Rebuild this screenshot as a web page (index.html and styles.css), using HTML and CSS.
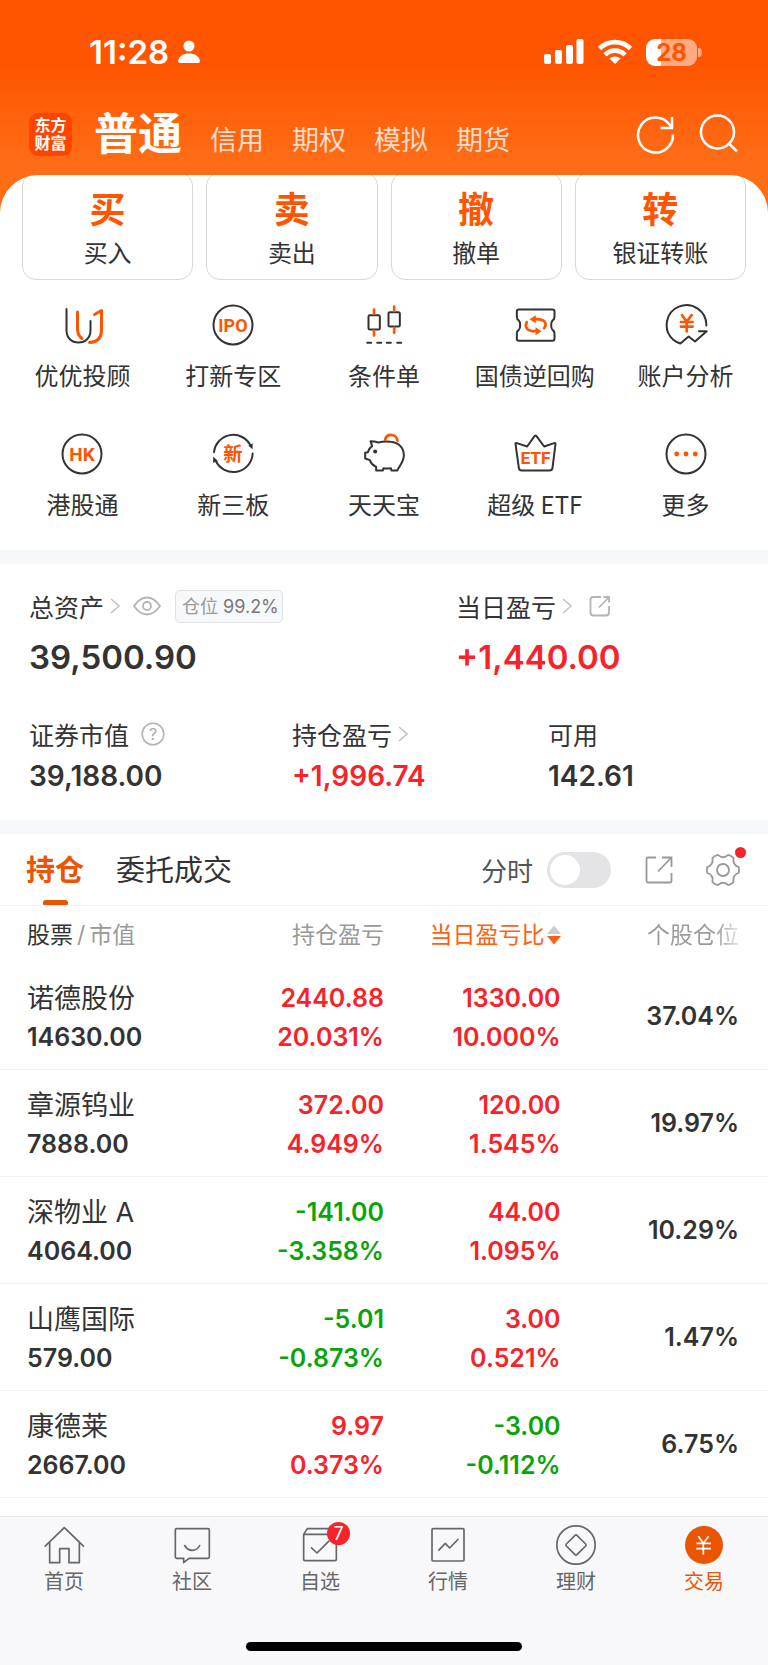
FILE: index.html
```html
<!DOCTYPE html>
<html lang="zh-CN">
<head>
<meta charset="utf-8">
<meta name="viewport" content="width=device-width, initial-scale=1">
<title>交易</title>
<link rel="stylesheet" href="styles.css">
</head>
<body>
<div class="app">
  <header class="header">
    <div class="status">
      <div class="status-time">
        <span>11:28</span>
        <svg width="22" height="24" viewBox="0 0 22 24" fill="#fff"><circle cx="11" cy="6" r="5.5"/><path d="M0 21C1 16 5 13.500 11 13.500S21 16 22 21Q22 23 20 23H2Q0 23 0 21Z"/></svg>
      </div>
      <div class="status-icons">
        <svg width="40" height="26" viewBox="0 0 40 26" fill="#fff"><rect x="0" y="15" width="7" height="10" rx="2"/><rect x="11" y="11" width="7" height="14" rx="2"/><rect x="22" y="6" width="7" height="19" rx="2"/><rect x="32.500" y="0" width="7" height="25" rx="2"/></svg>
        <svg width="36" height="26" viewBox="0 0 36 26"><g fill="none" stroke="#fff" stroke-width="4.600"><path d="M2.500 9.500A22 22 0 0 1 33.500 9.500"/><path d="M8 15.800A14 14 0 0 1 28 15.800"/></g><path d="M12.500 19.500A8.500 8.500 0 0 1 23.500 19.500L18 25Z" fill="#fff"/></svg>
        <div class="battery"><span>28</span></div>
      </div>
    </div>
    <div class="topbar">
      <div class="logo">东方<br>财富</div>
      <nav class="account-tabs">
        <a class="active" href="#">普通</a>
        <a href="#">信用</a>
        <a href="#">期权</a>
        <a href="#">模拟</a>
        <a href="#">期货</a>
      </nav>
      <button class="icon-btn" aria-label="刷新"><svg width="40" height="40" viewBox="0 0 40 40" fill="none" stroke="#fff" stroke-width="2.500"><path d="M37 20.500A17.500 17.500 0 1 1 33.500 10.500L36.500 14"/><path d="M36 3V14H24.500"/></svg></button>
      <button class="icon-btn" aria-label="搜索"><svg width="40" height="40" viewBox="0 0 40 40" fill="none" stroke="#fff" stroke-width="2.500"><circle cx="18.500" cy="18" r="16.500"/><path d="M29.500 29L38 37.500"/></svg></button>
    </div>
  </header>

  <main>
    <section class="panel">
      <div class="actions">
        <button class="action"><b>买</b><span>买入</span></button>
        <button class="action"><b>卖</b><span>卖出</span></button>
        <button class="action"><b>撤</b><span>撤单</span></button>
        <button class="action"><b>转</b><span>银证转账</span></button>
      </div>
      <div class="shortcuts">
        <a href="#"><svg class="ico" viewBox="0 0 44 44"><path class="k" d="M6.500 6V27C6.500 35 11.500 39.500 18.500 39.500S30.500 35 30.500 27V18"/><path class="o" d="M17.500 9V26Q17.500 32 22 35.500M29.500 39.500Q41.500 39 41.500 27V7.500L34.500 11.500"/></svg><span>优优投顾</span></a>
        <a href="#"><svg class="ico" viewBox="0 0 44 44"><circle class="k" cx="22" cy="22" r="19.500"/><text x="22" y="28.500" font-size="18">IPO</text></svg><span>打新专区</span></a>
        <a href="#"><svg class="ico z" viewBox="1084.500 37.500 132 132"><rect class="k" x="1104" y="74" width="34" height="43" rx="4"/><rect class="k" x="1164" y="65" width="34" height="43" rx="4"/><path class="o" d="M1120.500 57V70M1120.500 121V135M1181 48V61M1181 112V127"/><path class="k" d="M1100 157H1112M1130 157H1142M1159 157H1171M1190 157H1202"/></svg><span>条件单</span></a>
        <a href="#"><svg class="ico z" viewBox="385.500 37.500 132 132"><path class="k" d="M403 57H504Q510 57 510 63V80Q510 86 504 90Q500 94 500 104T504 118Q510 122 510 128V145Q510 151 504 151H403Q397 151 397 145V128Q397 122 403 118Q407 114 407 104T403 90Q397 86 397 80V63Q397 57 403 57Z"/><path class="o" d="M427 95Q421 106 428 115Q434 122 452 122M479 113Q487 103 480 93Q473 86 455 86"/><path d="M435 86L454 74V98ZM471 122L453 110V134Z" fill="#ff5500"/></svg><span>国债逆回购</span></a>
        <a href="#"><svg class="ico z" viewBox="837 37.500 132 132"><path class="k" d="M964 105A59.500 59.500 0 1 0 864 147Q872 154 886 159L911 138L930 153L965 122H942"/><path class="o" d="M891 74L905 93L920 74M905 93V123M888 94.500H923M888 108.500H923"/></svg><span>账户分析</span></a>
        <a href="#"><svg class="ico" viewBox="0 0 44 44"><circle class="k" cx="22" cy="22" r="19.500"/><text x="22" y="28.500" font-size="19">HK</text></svg><span>港股通</span></a>
        <a href="#"><svg class="ico z" viewBox="633 424.500 132 132"><path class="k" d="M642 485A58 58 0 0 1 752 466M758 489A58 58 0 0 1 647 510"/><path d="M745 466L758 458V476ZM654 512L639 517L640 498Z" fill="#333"/><text x="699" y="511" font-size="58">新</text></svg><span>新三板</span></a>
        <a href="#"><svg class="ico z" viewBox="10.500 19.500 132 132"><path class="k" d="M36 47Q48 47 60 51Q76 47 96 49C122 51 136 68 136 90C136 108 124 120 116 135H99L97 128Q86 130 75 128L73 135H53V124Q38 117 34 104L20 99V82L28 80Q31 68 41 62Z"/><path class="o" d="M80 43C84 23 113 23 117 46"/><circle cx="50" cy="78" r="6" fill="#333"/></svg><span>天天宝</span></a>
        <a href="#"><svg class="ico z" viewBox="385.500 424.500 132 132"><path class="k" d="M393 460Q393 457 397 458L428 468L450 437Q453 434 456 437L479 468L509 458Q513 457 513 460L504 532Q503 540 495 540H412Q404 540 403 532Z"/><text x="453" y="520" font-size="52">ETF</text></svg><span>超级 ETF</span></a>
        <a href="#"><svg class="ico" viewBox="0 0 44 44"><circle class="k" cx="22" cy="22" r="19.500"/><g fill="#ff5500"><circle cx="12.700" cy="22" r="2.400"/><circle cx="22" cy="22" r="2.400"/><circle cx="31.300" cy="22" r="2.400"/></g></svg><span>更多</span></a>
      </div>
    </section>

    <section class="assets">
      <div class="asset-row two">
        <div class="asset big">
          <div class="asset-label">总资产<svg class="chev" viewBox="0 0 10 16"><path d="M1 1L9 8L1 15"/></svg>
            <button class="plain eye" aria-label="隐藏金额"><svg width="28" height="20" viewBox="0 0 28 20" fill="none" stroke="#b4b4b6" stroke-width="1.800"><path d="M1 10Q7 1.500 14 1.500T27 10Q21 18.500 14 18.500T1 10Z"/><circle cx="14" cy="10" r="4"/></svg></button>
            <span class="badge">仓位 <em>99.2%</em></span></div>
          <strong>39,500.90</strong>
        </div>
        <div class="asset big">
          <div class="asset-label">当日盈亏<svg class="chev" viewBox="0 0 10 16"><path d="M1 1L9 8L1 15"/></svg>
            <button class="plain share-sm" aria-label="分享"><svg width="22" height="22" viewBox="0 0 22 22" fill="none" stroke="#b4b4b6" stroke-width="1.800"><path d="M12 2H4.500Q1.500 2 1.500 5V17.500Q1.500 20.500 4.500 20.500H17Q20 20.500 20 17.500V11M10 12.500L20 2M14.500 2H20V7.500"/></svg></button></div>
          <strong class="up">+1,440.00</strong>
        </div>
      </div>
      <div class="asset-row three">
        <div class="asset"><div class="asset-label">证券市值<svg class="help" width="24" height="24" viewBox="0 0 24 24"><circle cx="12" cy="12" r="10.800" fill="none" stroke="#b4b4b6" stroke-width="1.600"/><text x="12" y="17.500">?</text></svg></div><strong>39,188.00</strong></div>
        <div class="asset"><div class="asset-label">持仓盈亏<svg class="chev" viewBox="0 0 10 16"><path d="M1 1L9 8L1 15"/></svg></div><strong class="up">+1,996.74</strong></div>
        <div class="asset"><div class="asset-label">可用</div><strong>142.61</strong></div>
      </div>
    </section>

    <section class="holdings">
      <div class="toolbar">
        <button class="tab active">持仓</button>
        <button class="tab">委托成交</button>
        <label class="switch-label">分时<input class="switch" type="checkbox" role="switch"></label>
        <button class="plain share" aria-label="分享"><svg width="28" height="28" viewBox="0 0 28 28" fill="none" stroke="#999" stroke-width="1.800"><path d="M11 1.500H3Q1.500 1.500 1.500 3V25Q1.500 26.500 3 26.500H25Q26.500 26.500 26.500 25V17M13 15.500L26.500 1.500M17 1.500H26.500V11"/></svg></button>
        <button class="plain gear" aria-label="设置"><svg width="36" height="36" viewBox="0 0 36 36" fill="none" stroke="#999" stroke-width="1.800"><path d="M33.700 15Q34.500 18 33.700 21Q27.500 22.500 28.500 30.100Q26 32.500 23.200 33.100Q18 28.500 12.800 33.100Q10 32.500 7.500 30.100Q8.500 22.500 2.300 21Q1.500 18 2.300 15Q8.500 13.500 7.500 5.900Q10 3.500 12.800 2.900Q18 7.500 23.200 2.900Q26 3.500 28.500 5.900Q27.500 13.500 33.700 15Z"/><circle cx="18" cy="18" r="6"/></svg><i class="dot"></i></button>
      </div>
      <table class="stocks">
        <thead>
          <tr><th class="name"><b>股票</b><i>/</i>市值</th><th>持仓盈亏</th><th class="sorted">当日盈亏比<svg class="sort" width="14" height="20" viewBox="0 0 14 20"><path d="M7 0.500L14 9H0Z" fill="#ccc"/><path d="M0 11H14L7 19.500Z" fill="#ff5f0f"/></svg></th><th class="fade">个股仓位</th></tr>
        </thead>
        <tbody>
          <tr><td class="name"><span>诺德股份</span><b>14630.00</b></td><td class="up">2440.88<br>20.031%</td><td class="up">1330.00<br>10.000%</td><td>37.04%</td></tr>
          <tr><td class="name"><span>章源钨业</span><b>7888.00</b></td><td class="up">372.00<br>4.949%</td><td class="up">120.00<br>1.545%</td><td>19.97%</td></tr>
          <tr><td class="name"><span>深物业 A</span><b>4064.00</b></td><td class="down">-141.00<br>-3.358%</td><td class="up">44.00<br>1.095%</td><td>10.29%</td></tr>
          <tr><td class="name"><span>山鹰国际</span><b>579.00</b></td><td class="down">-5.01<br>-0.873%</td><td class="up">3.00<br>0.521%</td><td>1.47%</td></tr>
          <tr><td class="name"><span>康德莱</span><b>2667.00</b></td><td class="up">9.97<br>0.373%</td><td class="down">-3.00<br>-0.112%</td><td>6.75%</td></tr>
        </tbody>
      </table>
    </section>
  </main>

  <footer class="bottom">
    <nav class="tabbar">
      <a href="#"><svg class="tico" viewBox="126 129 132 132"><path d="M134 200L193 143L252 200M149 187V248H179V206H207V248H238V187"/></svg><span>首页</span></a>
      <a href="#"><svg class="tico" viewBox="510 129 132 132"><path d="M530 146H624Q628 146 628 150V231Q628 235 624 235H567L551 248V235H530Q526 235 526 231V150Q526 146 530 146ZM553 195Q562 211 577 211T600 195"/></svg><span>社区</span></a>
      <a href="#"><span class="tico-wrap"><svg class="tico" viewBox="894 129 132 132"><path d="M911 163L922 146H1003L1009 163V238Q1009 242 1005 242H915Q911 242 911 238ZM911 163H1009M933 202L951 219L988 182"/></svg><i class="count">7</i></span><span>自选</span></a>
      <a href="#"><svg class="tico" viewBox="126 129 132 132"><rect x="144" y="146" width="96" height="97" rx="3"/><path d="M163 212L184 190L197 204L223 177"/></svg><span>行情</span></a>
      <a href="#"><svg class="tico" viewBox="510 129 132 132"><circle cx="576" cy="195" r="57.500"/><path d="M573 166Q576 163 579 166L605 192Q608 195 605 198L579 224Q576 227 573 224L547 198Q544 195 547 192Z"/></svg><span>理财</span></a>
      <a class="active" href="#"><svg class="tico" viewBox="894 129 132 132"><circle cx="960" cy="195" r="57" fill="#ea5504" stroke="none"/><path d="M943 169L958 190L974 169M958 190V224M937 190H981M937 206H981" stroke="#fff"/></svg><span>交易</span></a>
    </nav>
    <div class="home-indicator"></div>
  </footer>
</div>
</body>
</html>
```
FILE: styles.css
```css
* { box-sizing: border-box; }

body {
  margin: 0;
  background: #fff;
  color: #333;
  font-family: Inter, "Noto Sans CJK SC", sans-serif;
}

a { color: inherit; text-decoration: none; }
button { font: inherit; color: inherit; background: none; border: 0; padding: 0; }
svg { display: block; flex: none; }

.app {
  display: flex;
  flex-direction: column;
  min-height: 100vh;
  background: linear-gradient(#ff5500 0, #ff5500 64px, #ff6c16 160px, #ff6c16 230px, #fff 230px);
}
main { flex: 1; }

/* Header */
.header { color: #fff; }
.status {
  display: flex;
  justify-content: space-between;
  align-items: center;
  padding: 36px 65px 0 89px;
}
.status-time { display: flex; align-items: center; gap: 9px; font-size: 33px; line-height: 32px; font-weight: 600; }
.status-icons { display: flex; align-items: center; gap: 13px; }
.battery {
  position: relative;
  width: 51px;
  height: 27px;
  margin-right: 6px;
  border-radius: 9px;
  background: linear-gradient(90deg, #fff 15px, #ffab82 15px);
  color: #ff5500;
  font-size: 24px;
  font-weight: 700;
  line-height: 27px;
  text-align: center;
}
.battery::after {
  content: "";
  position: absolute;
  left: 52px;
  top: 9px;
  width: 4px;
  height: 9px;
  border-radius: 0 4px 4px 0;
  background: #ffab82;
}
.topbar { display: flex; align-items: center; height: 107px; padding: 25px 29px 0; }
.logo {
  width: 43px;
  height: 43px;
  margin-right: 22px;
  padding: 3px 0;
  border-radius: 9px;
  background: #ff4400;
  font-size: 16px;
  font-weight: 700;
  line-height: 18px;
  text-align: center;
}
.account-tabs { display: flex; flex: 1; align-items: baseline; gap: 28px; padding-top: 6px; font-size: 27px; line-height: 66px; color: #ffdcc8; }
.account-tabs .active { color: #fff; font-size: 44px; font-weight: 700; }
.icon-btn { margin-left: 23px; }

/* Trade actions and shortcuts */
.panel { overflow: hidden; background: #fff; border-radius: 38px 38px 0 0; }
.actions {
  display: grid;
  grid-template-columns: repeat(4, 1fr);
  gap: 13px;
  margin-top: -3px;
  padding: 0 22px;
}
.action {
  display: flex;
  flex-direction: column;
  align-items: center;
  padding: 15px 0 6px;
  border: 1px solid #d8d8da;
  border-radius: 14px;
}
.action b { font-size: 36px; line-height: 44px; color: #ff5500; }
.action span { padding-top: 2px; font-size: 24px; line-height: 39px; }
.shortcuts {
  display: grid;
  grid-template-columns: repeat(5, 1fr);
  row-gap: 39px;
  padding: 23px 7px 28px;
  font-family: "Noto Sans CJK SC", sans-serif;
}
.shortcuts a { display: flex; flex-direction: column; align-items: center; gap: 10px; font-size: 24px; line-height: 36px; white-space: nowrap; }
.ico { width: 44px; height: 44px; }
.ico .k, .ico .o { fill: none; stroke: #333; stroke-width: 2; stroke-linejoin: round; stroke-linecap: round; }
.ico .o { stroke: #ff5500; stroke-width: 3; }
.ico.z .k { stroke-width: 6; }
.ico.z .o { stroke-width: 8; }
.ico text { fill: #ff5500; font-family: Roboto, "Noto Sans CJK SC", sans-serif; font-weight: 700; text-anchor: middle; }

/* Assets */
.assets { padding: 22px 29px 24px; border-top: 14px solid #f7f8fa; background: #fff; }
.asset-row { display: grid; }
.two { grid-template-columns: 427fr 283fr; margin-bottom: 37px; }
.three { grid-template-columns: 263fr 256fr 191fr; }
.asset-label { display: flex; align-items: center; height: 38px; font-size: 25px; }
.asset strong { display: block; margin-top: 3px; font-size: 28px; line-height: 40px; font-weight: 600; }
.big .asset-label { height: 40px; }
.big strong { margin-top: 10px; font-size: 33px; line-height: 42px; }
.asset .up, .stocks .up { color: #f8222a; }
.chev { width: 10px; height: 16px; margin-left: 6px; fill: none; stroke: #c4c4c6; stroke-width: 1.600; }
.eye { margin-left: 13px; }
.share-sm { margin-left: 17px; }
.help { margin-left: 12px; }
.help text { fill: #aaa; font-size: 16px; text-anchor: middle; }
.badge {
  margin-left: 14px;
  padding: 0 3px 0 6px;
  border: 1px solid #e2e2e5;
  border-radius: 5px;
  background: #f7f8fa;
  color: #999;
  font-size: 18px;
  line-height: 31px;
}
.badge em { font-style: normal; color: #777; }

/* Holdings */
.holdings { border-top: 14px solid #f7f8fa; background: #fff; }
.toolbar { display: flex; align-items: center; height: 72px; padding: 0 27px 0 26px; border-bottom: 1px solid #f2f2f4; }
.tab { position: relative; height: 72px; margin-right: 32px; padding-bottom: 4px; font-size: 29px; }
.tab.active { color: #ea5504; font-weight: 700; }
.tab.active::after {
  content: "";
  position: absolute;
  left: 50%;
  bottom: 1px;
  width: 25px;
  height: 5px;
  margin-left: -12px;
  border-radius: 3px 3px 1px 1px;
  background: #ea5504;
}
.switch-label { display: flex; align-items: center; gap: 14px; margin-left: auto; font-size: 26px; color: #555; }
.switch { appearance: none; width: 64px; height: 36px; margin: 0; padding: 3px; border-radius: 18px; background: #e4e4e6; }
.switch::before { content: ""; display: block; width: 30px; height: 30px; border-radius: 50%; background: #fff; }
.share { margin-left: 34px; }
.gear { position: relative; margin-left: 32px; }
.dot { position: absolute; right: -5px; top: -5px; width: 11px; height: 11px; border-radius: 50%; background: #f8222a; }

.stocks { width: 100%; border-collapse: collapse; table-layout: fixed; }
.stocks th { width: 23%; height: 56px; padding: 0 0 3px; text-align: right; font-size: 23px; font-weight: 400; color: #999; white-space: nowrap; }
.stocks th:nth-child(2) { width: 24%; }
.stocks th.name { width: 26%; }
.stocks th:last-child { width: 27%; }
.stocks th.name b { font-weight: 400; color: #333; }
.stocks th.name i { padding: 0 4px; font-style: normal; }
.stocks th.sorted { color: #ff5f0f; }
.sort { display: inline-block; margin-left: 2px; vertical-align: -2px; }
.stocks .fade { background: linear-gradient(90deg, #999 74%, #e4e4e4 86%); background-clip: text; color: transparent; }
.stocks td {
  height: 107px;
  padding: 5px 0 0;
  border-bottom: 1px solid #f2f2f4;
  text-align: right;
  font-size: 25px;
  line-height: 39px;
  font-weight: 600;
}
.stocks .name { padding-left: 27px; text-align: left; }
.stocks td.name span, .stocks td.name b { display: block; font-weight: 600; }
.stocks td.name span { font-size: 27px; font-weight: 400; }
.stocks th:last-child, .stocks td:last-child { padding-right: 29px; }
.stocks td:last-child { padding-top: 2px; }
.stocks .down { color: #0ba30b; }

/* Bottom bar */
.bottom { padding-bottom: 14px; border-top: 1px solid #e9e9eb; background: #f8f8fa; }
.tabbar { display: grid; grid-template-columns: repeat(6, 1fr); padding-top: 6px; }
.tabbar a { display: flex; flex-direction: column; align-items: center; font-size: 20px; line-height: 30px; color: #666; }
.tabbar .active { color: #ea5504; }
.tico { width: 44px; height: 44px; fill: none; stroke: #666; stroke-width: 5; stroke-linejoin: round; }
.tico-wrap { position: relative; }
.count {
  position: absolute;
  left: 29px;
  top: -1px;
  width: 23px;
  height: 23px;
  border-radius: 50%;
  background: #f8222a;
  color: #fff;
  font-size: 18px;
  font-style: normal;
  line-height: 23px;
  text-align: center;
}
.home-indicator { width: 36%; height: 9px; margin: 45px auto 0; border-radius: 5px; background: #000; }
```
